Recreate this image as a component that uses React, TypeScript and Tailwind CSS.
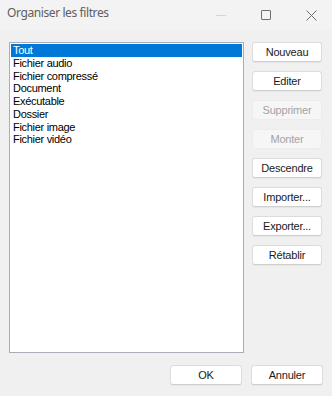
import React from "react";

const items = [
  "Tout",
  "Fichier audio",
  "Fichier compressé",
  "Document",
  "Exécutable",
  "Dossier",
  "Fichier image",
  "Fichier vidéo",
];

function Btn({ label, disabled, w = "w-[70px]" }: { label: string; disabled?: boolean; w?: string }) {
  return (
    <div
      className={
        "h-[20px] flex items-center justify-center rounded-[3px] border text-[11px] tracking-[-0.2px] " +
        w +
        " " +
        (disabled
          ? "bg-[#f6f6f6] border-[#ececec] text-[#a3a3a3]"
          : "bg-white border-[#dcdcdc] border-b-[#cfcfcf] text-[#1a1a1a] shadow-[0_1px_0_rgba(0,0,0,0.04)]")
      }
    >
      {label}
    </div>
  );
}

export default function App() {
  return (
    <div
      className="w-[332px] h-[396px] bg-[#f0f0f0] flex flex-col overflow-hidden"
      style={{ fontFamily: '"Liberation Sans", Arial, sans-serif' }}
    >
      <div className="h-[30px] bg-[#f3f3f3] flex items-center pl-[7px] pb-[4px] pr-[15px]">
        <span
          className="text-[12px] tracking-[-0.4px] text-[#606060] flex-1"
          style={{ fontFamily: '"Noto Sans", "Open Sans", sans-serif' }}
        >
          Organiser les filtres
        </span>
        <div className="flex items-center gap-[35px] pt-[4px]">
          <div className="w-[10px] h-px bg-[#d4d4d4]" />
          <div className="w-[10px] h-[10px] border border-[#6e6e6e] rounded-[1px]" />
          <svg width="11" height="11" viewBox="0 0 11 11">
            <path d="M0.5 0.5 L10.5 10.5 M10.5 0.5 L0.5 10.5" stroke="#6e6e6e" strokeWidth="1" fill="none" />
          </svg>
        </div>
      </div>
      <div className="flex pt-[12px] pl-[9px] gap-[8px]">
        <div className="w-[235px] h-[311px] bg-white border border-[#a8adb8] p-px">
          {items.map((t, i) => (
            <div
              key={t}
              className={
                "h-[12.75px] leading-[12.75px] pl-[2px] text-[11px] tracking-[-0.3px] " +
                (i === 0 ? "bg-[#0078d7] text-white" : "text-black")
              }
            >
              {t}
            </div>
          ))}
        </div>
        <div className="flex flex-col gap-[9px]">
          <Btn label="Nouveau" />
          <Btn label="Editer" />
          <Btn label="Supprimer" disabled />
          <Btn label="Monter" disabled />
          <Btn label="Descendre" />
          <Btn label="Importer..." />
          <Btn label="Exporter..." />
          <Btn label="Rétablir" />
        </div>
      </div>
      <div className="flex justify-end gap-[9px] pr-[9px] mt-[12px]">
        <Btn label="OK" w="w-[72px]" />
        <Btn label="Annuler" w="w-[72px]" />
      </div>
    </div>
  );
}
